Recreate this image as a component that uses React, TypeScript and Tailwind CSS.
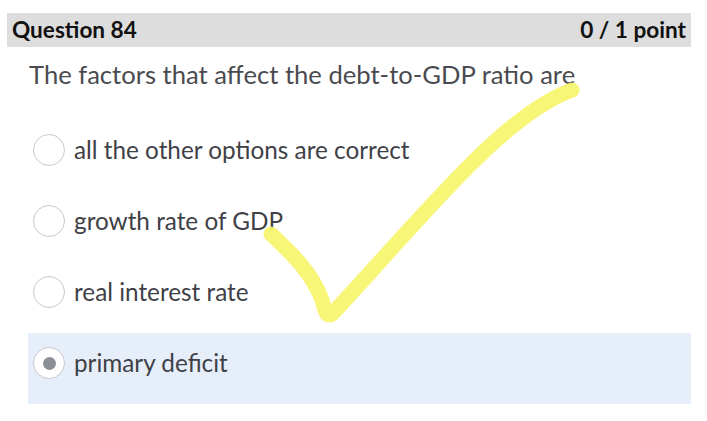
import React from "react";

function Radio({ checked }: { checked?: boolean }) {
  return (
    <div className="w-[32px] h-[32px] rounded-full border-[1.5px] border-[#c9c9cc] bg-white flex items-center justify-center shrink-0">
      {checked && <div className="w-[13px] h-[13px] rounded-full bg-[#8b8f98]" />}
    </div>
  );
}

function Option({ label, checked }: { label: string; checked?: boolean }) {
  return (
    <div
      className={`h-[71px] flex items-start pl-[5px] pt-[14px] ${checked ? "bg-[#e6eef9]" : ""}`}
    >
      <div className="flex items-center gap-[9px]">
        <Radio checked={checked} />
        <span className="text-[24.3px] leading-[32px] text-[#3f4147]">{label}</span>
      </div>
    </div>
  );
}

export default function App() {
  return (
    <div
      className="relative w-[707px] h-[421px] bg-white overflow-hidden"
      style={{ fontFamily: "Lato, 'Open Sans', sans-serif" }}
    >
      <div className="pt-[13px] pl-[7px] pr-[16px]">
        <div className="h-[34px] bg-[#dddddd] flex items-center justify-between pl-[5px] pr-[5px]">
          <span className="text-[22.6px] font-bold text-[#111]">Question 84</span>
          <span className="text-[22.6px] font-bold text-[#111]">0 / 1 point</span>
        </div>
      </div>
      <div className="pl-[29px] mt-[12px] text-[25.6px] leading-[30px] text-[#4a4b50]">
        The factors that affect the debt-to-GDP ratio are
      </div>
      <div className="mt-[31px] ml-[28px] mr-[16px] flex flex-col">
        <Option label="all the other options are correct" />
        <Option label="growth rate of GDP" />
        <Option label="real interest rate" />
        <Option label="primary deficit" checked />
      </div>
      <svg
        className="absolute left-0 top-0 pointer-events-none"
        width="707"
        height="421"
        viewBox="0 0 707 421"
      >
        <path
          d="M271 234 C 290 252, 312 272, 322 300 C 325 310, 326 318, 332 314 C 360 285, 420 215, 470 165 C 510 125, 545 100, 572 90"
          fill="none"
          stroke="#f6f56b"
          strokeWidth="15"
          strokeLinecap="round"
          strokeLinejoin="round"
          opacity="0.92"
        />
      </svg>
    </div>
  );
}
